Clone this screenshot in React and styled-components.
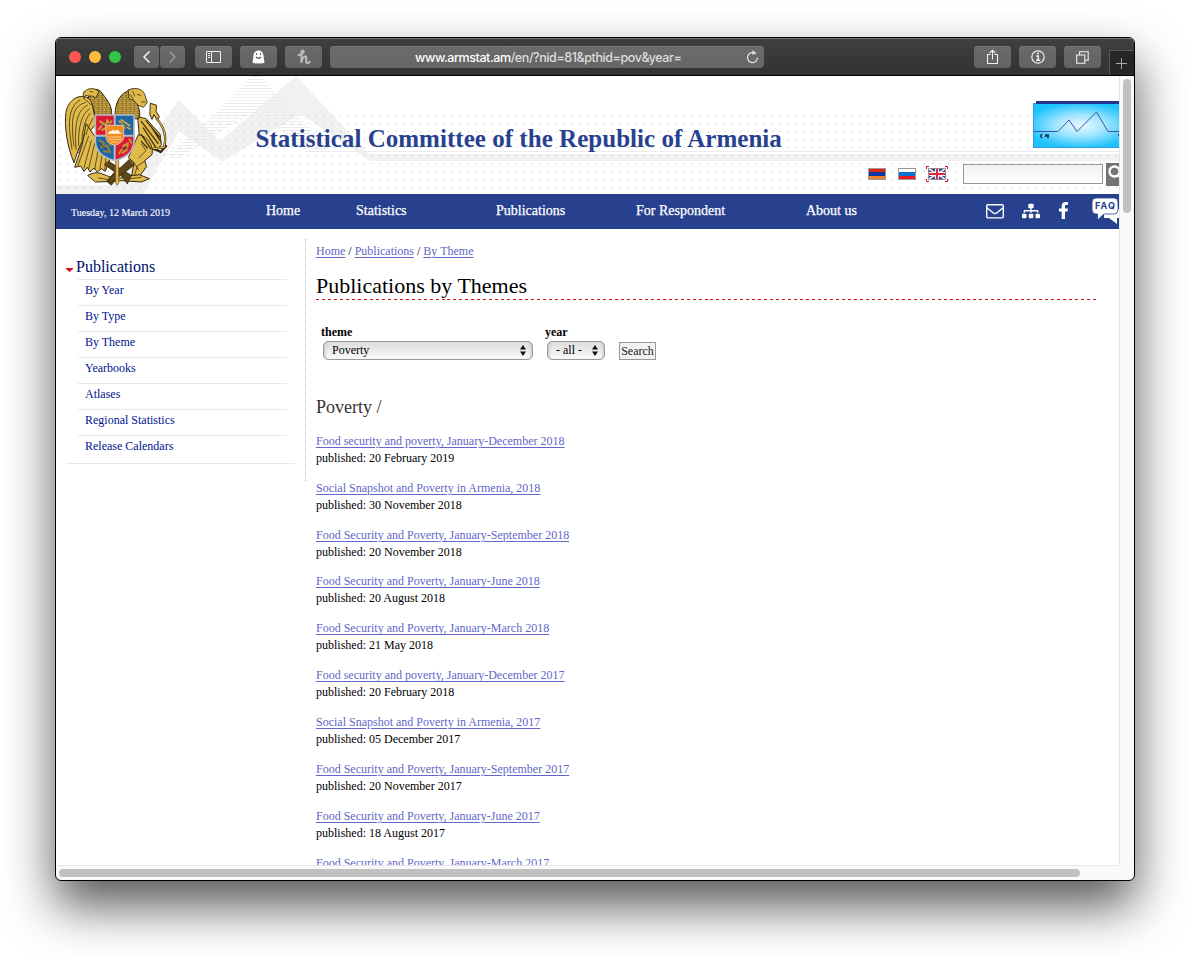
import React from 'react';
import styled, { createGlobalStyle } from 'styled-components';
import { FaSitemap, FaFacebookF } from 'react-icons/fa';

const serif = '"Liberation Serif", "Times New Roman", serif';
const navy = '#28418f';

const GlobalStyle = createGlobalStyle`
  *, *::before, *::after { box-sizing: border-box; }
  body { margin: 0; background: #fff; overflow: hidden; font-family: ${serif}; font-size: 12px; color: #000; }
  svg { display: block; flex: none; }
`;

const Desktop = styled.div`
  width: 1190px;
  height: 954px;
  padding: 37px 55px 0;
  overflow: hidden;
`;

const BrowserWindow = styled.div`
  width: 1080px;
  height: 844px;
  border: 1px solid #000;
  border-radius: 6px;
  overflow: hidden;
  background: #fafafa;
  box-shadow: 0 25px 50px rgba(0, 0, 0, 0.66);
  display: flex;
  flex-direction: column;
`;

const TitleBar = styled.div`
  flex: none;
  height: 38px;
  display: flex;
  align-items: flex-start;
  padding: 7px 0 0 13px;
  background: linear-gradient(#3e403f, #313332);
  border-top: 1px solid #747574;
  border-bottom: 1px solid #000;
`;

const Lights = styled.div`
  display: flex;
  gap: 8px;
  padding-top: 5px;
  width: 65px;
`;

const Light = styled.span`
  width: 12px;
  height: 12px;
  border-radius: 50%;
  background: ${(p) => p.$color};
`;

const ToolButton = styled.div`
  flex: none;
  width: ${(p) => p.$width || 37}px;
  height: 22px;
  margin-left: ${(p) => p.$gap ?? 8}px;
  border-radius: 4px;
  background: linear-gradient(#696a69, #616362);
  box-shadow: inset 0 1px 0 #767776;
  display: flex;
  align-items: center;
  justify-content: center;
`;

const AddressBar = styled.div`
  flex: none;
  width: 434px;
  height: 22px;
  margin-left: 8px;
  padding: 0 5px 0 85px;
  border-radius: 4px;
  background: linear-gradient(#6a6b6a, #656665);
  box-shadow: inset 0 1px 0 #767776;
  display: flex;
  align-items: center;
  justify-content: space-between;
  font: 500 12.5px/24px Inter, sans-serif;
  letter-spacing: -0.42px;
  color: #fff;
  white-space: nowrap;
  > span { padding-top: 1px; }
  span span { color: #dedede; }
`;

const NewTab = styled.div`
  flex: none;
  width: 25px;
  height: 25px;
  margin: 4px 0 0 8px;
  border: 1px solid #5a5c5b;
  border-width: 1px 0 0 1px;
  background: #252727;
  display: flex;
  align-items: center;
  padding-left: 6px;
`;

const Viewport = styled.div`
  flex: 1;
  min-height: 0;
  display: flex;
`;

const Page = styled.div`
  flex: none;
  width: 1063px;
  height: 789px;
  overflow: hidden;
  background: #fff;
`;

const VerticalTrack = styled.div`
  width: 15px;
  height: 790px;
  border-left: 1px solid #e6e6e6;
  padding: 3px 0 0 3px;
`;

const HorizontalTrack = styled.div`
  flex: none;
  height: 15px;
  width: 1064px;
  border-top: 1px solid #e6e6e6;
  padding: 3px;
`;

const Thumb = styled.div`
  width: ${(p) => p.$w}px;
  height: ${(p) => p.$h}px;
  border-radius: 4px;
  background: #c1c1c1;
`;

const Header = styled.header`
  height: 118px;
  display: grid;
  grid-template-columns: 1063px;
  overflow: hidden;
`;

const Backdrop = styled.svg`
  grid-area: 1 / 1;
`;

const HeaderContent = styled.div`
  grid-area: 1 / 1;
  display: flex;
  padding-left: 4px;
`;

const EmblemBox = styled.div`
  flex: none;
  padding-top: 8px;
  width: 195.5px;
`;

const SiteTitle = styled.div`
  flex: none;
  width: 608.5px;
  padding-top: 47px;
  font-size: 25px;
  line-height: 32px;
  font-weight: bold;
  letter-spacing: 0.03px;
  color: ${navy};
  white-space: nowrap;
`;

const HeaderTools = styled.div`
  flex: none;
  width: 255px;
  display: flex;
  flex-direction: column;
  overflow: hidden;
`;

const LogoRow = styled.div`
  height: 87px;
  padding: 25px 0 0 169px;
`;

const ToolRow = styled.div`
  display: flex;
`;

const Flags = styled.div`
  flex: none;
  display: flex;
  gap: 8px;
  padding-top: 3px;
  margin-left: 2px;
  width: 97px;
`;

const SearchInput = styled.div`
  flex: none;
  width: 140px;
  height: 20px;
  margin: 1px 3px 0 0;
  border: 1px solid #999;
  background: linear-gradient(#f1f1f1, #fff);
`;

const SearchButton = styled.div`
  flex: none;
  width: 24px;
  height: 23px;
  background: #747474;
  padding: 1px 0 0 1px;
`;

const Nav = styled.nav`
  height: 35px;
  overflow: hidden;
  background: ${navy};
  color: #fff;
  display: flex;
  font-size: 14px;
  line-height: 33px;
  -webkit-text-stroke: 0.25px #fff;
`;

const DateText = styled.span`
  flex: none;
  width: 210px;
  padding-left: 15px;
  font-size: 10px;
  line-height: 37px;
  -webkit-text-stroke: 0.1px #fff;
`;

const NavItem = styled.a`
  flex: none;
  width: ${(p) => p.$w}px;
`;

const NavIcons = styled.div`
  flex: none;
  display: flex;
  -webkit-text-stroke: 0;
`;

const NavIcon = styled.span`
  flex: none;
  width: ${(p) => p.$w}px;
  padding-top: ${(p) => p.$top}px;
`;

const Body = styled.div`
  display: flex;
  align-items: flex-start;
  padding-top: 10px;
`;

const Sidebar = styled.aside`
  flex: none;
  width: 250px;
  height: 242px;
  padding: 16px 10px 0;
  border-right: 1px dotted #b5b5b5;
  color: #00148f;
`;

const SideHeading = styled.div`
  display: flex;
  height: 24px;
  font-size: 16px;
  line-height: 24px;
  color: #000f6b;
  svg { margin: 13px 3px 0 0; }
`;

const SideList = styled.div`
  border-bottom: 1px solid #e9e9e9;
  padding: 0 8px 2px 12px;
  height: 185px;
`;

const SideItem = styled.div`
  height: 26px;
  padding-left: 7px;
  line-height: 21px;
  border-top: 1px solid #e9e9e9;
`;

const Main = styled.main`
  flex: none;
  width: 790px;
  padding-left: 10px;
`;

const Link = styled.a`
  color: #6266c9;
  text-decoration: underline;
  text-underline-offset: 2px;
  text-decoration-thickness: 1px;
`;

const Crumbs = styled.div`
  height: 32px;
  line-height: 24px;
`;

const PageTitle = styled.h1`
  height: 29px;
  margin: 0;
  font-size: 22px;
  line-height: 30px;
  font-weight: normal;
  background: repeating-linear-gradient(90deg, #d4121f 0 3px, transparent 3px 5.977px) bottom / 100% 1px no-repeat;
`;

const FilterForm = styled.div`
  display: flex;
  height: 96px;
  padding: 23px 0 0 5px;
`;

const Field = styled.div`
  width: ${(p) => p.$w}px;
  font-weight: bold;
  line-height: 18px;
`;

const Select = styled.div`
  width: ${(p) => p.$w}px;
  height: 19px;
  margin-left: 2px;
  padding: 0 6px 0 8px;
  border: 1px solid #999;
  border-radius: 5px;
  background: linear-gradient(#dcdcdc, #fbfbfb);
  box-shadow: inset 3px 0 3px -2px #c5c5c5, inset -3px 0 3px -2px #c5c5c5;
  display: flex;
  align-items: center;
  justify-content: space-between;
  font-weight: normal;
  line-height: 17px;
`;

const SubmitButton = styled.div`
  width: 37px;
  height: 18px;
  margin-top: 19px;
  border: 1px solid #999;
  background: #f2f2f2;
  color: #222;
  text-align: center;
  line-height: 16px;
`;

const GroupTitle = styled.h2`
  margin: 0;
  height: 36.8px;
  font-size: 18px;
  line-height: 23px;
  font-weight: normal;
  color: #333;
`;

const Entry = styled.div`
  height: 46.875px;
  line-height: 17px;
`;

const sideItems = ['By Year', 'By Type', 'By Theme', 'Yearbooks', 'Atlases', 'Regional Statistics', 'Release Calendars'];

const entries = [
  ['Food security and poverty, January-December 2018', '20 February 2019'],
  ['Social Snapshot and Poverty in Armenia, 2018', '30 November 2018'],
  ['Food Security and Poverty, January-September 2018', '20 November 2018'],
  ['Food Security and Poverty, January-June 2018', '20 August 2018'],
  ['Food Security and Poverty, January-March 2018', '21 May 2018'],
  ['Food security and poverty, January-December 2017', '20 February 2018'],
  ['Social Snapshot and Poverty in Armenia, 2017', '05 December 2017'],
  ['Food Security and Poverty, January-September 2017', '20 November 2017'],
  ['Food Security and Poverty, January-June 2017', '18 August 2017'],
  ['Food Security and Poverty, January-March 2017'],
];

const Arrows = () => (
  <svg width="6" height="11" viewBox="0 0 6 11"><path d="M0 4.5 3 0l3 4.5zM0 6.5h6L3 11z" fill="#111" /></svg>
);

const HeaderArt = () => (
  <Backdrop width="1063" height="118" viewBox="0 0 1063 118">
    <defs>
      <pattern id="dots" x="4" y="7" width="8" height="8" patternUnits="userSpaceOnUse">
        <rect width="1" height="1" fill="#c4c4c4" />
      </pattern>
      <pattern id="stripes" width="4" height="3" patternUnits="userSpaceOnUse">
        <rect width="4" height="1" fill="#ececec" />
      </pattern>
    </defs>
    <path d="M0 109H60L123 24L164 65L240 0L313 78H1063V85H314L244 37.7L166.3 86L123 55L87 118H0Z" fill="#f1f1f1" />
    <path d="M200 -4L278 78H252L204 36L184 44L122 83L108 80L150 46Z" fill="url(#stripes)" />
    <rect x="262" y="75" width="801" height="1" fill="#ececec" />
    <rect x="4" y="39" width="1059" height="75" fill="url(#dots)" />
  </Backdrop>
);

const Emblem = () => (
  <svg width="110" height="106" viewBox="0 0 330 318" strokeLinejoin="round" strokeLinecap="round">
    <defs>
      <pattern id="scales" width="12" height="12" patternUnits="userSpaceOnUse">
        <rect width="12" height="12" fill="#e0bb4c" />
        <path d="M0 2Q3 8 6 2Q9 8 12 2M-6 8Q-3 14 0 8Q3 14 6 8Q9 14 12 8" fill="none" stroke="#4a3511" strokeWidth="2.4" />
      </pattern>
    </defs>
    <g fill="#e0bb4c" stroke="#35270d" strokeWidth="3">
      <path d="M92 45C60 25 25 45 18 85C12 125 22 190 42 236L54 200C62 180 70 165 78 155L108 120Z" />
      <path d="M78 120L66 185L44 250L62 246L72 262L82 250L90 264L102 252L112 264L124 254L136 262L150 225L120 180Z" />
      <path d="M234 98L258 104L280 128L300 150L304 182L290 200L242 186Z" />
      <path d="M236 152C260 156 282 184 276 212L254 230L260 248L240 274L214 280L222 236L206 222Z" />
      <path d="M272 58L290 64L288 82L298 98L292 108L282 92L276 106L270 92Z" />
      <path d="M84 274C112 258 126 270 148 278L174 284L204 276L238 272L268 284L244 294L184 290L158 292L108 294Z" />
    </g>
    <g fill="url(#scales)" stroke="#35270d" strokeWidth="3">
      <path d="M84 42C92 16 106 10 122 22L134 38C150 58 158 76 154 98H108C96 70 98 50 84 42Z" />
      <path d="M166 98C162 70 176 32 198 24C216 8 236 16 242 36L232 62C242 84 240 92 236 104Z" />
    </g>
    <path d="M72 24C84 10 106 10 116 24L108 42Q98 34 86 36L76 34L72 44Q66 32 72 24Z" fill="#e0bb4c" stroke="#35270d" strokeWidth="2.5" />
    <path d="M206 18C230 6 254 18 256 38L262 56L250 70L234 64L222 50L208 44Z" fill="#e0bb4c" stroke="#35270d" strokeWidth="2.5" />
    <path d="M290 104C312 128 320 160 312 190L282 194L302 204L318 186" fill="none" stroke="#35270d" strokeWidth="7" />
    <path d="M290 104C312 128 320 160 312 190L282 194" fill="none" stroke="#e0bb4c" strokeWidth="3.5" />
    <g fill="none" stroke="#433110" strokeWidth="2.4">
      <path d="M76 56C40 64 30 100 42 186M82 64C52 78 42 120 48 196M88 74C64 92 54 130 56 184M90 88C76 104 66 140 66 168M98 104C88 122 82 136 78 152M60 48C34 62 24 96 30 150L36 196M74 46Q84 52 92 62" />
      <path d="M86 156L54 244M94 170L72 252M104 178L86 254M116 190L104 256M128 200L120 254M140 206L134 256M74 150L56 206" />
      <path d="M90 22L98 24M232 32L242 34M244 54L256 54M218 22L224 36M212 32L220 46" />
      <path d="M244 112L294 178M250 132L286 188M244 152L272 194M258 110L300 160M244 172L262 192M272 126L302 172" strokeWidth="4" />
      <path d="M244 180L258 200L236 222M222 236L236 258M256 230L232 246L224 272M116 282L140 286M208 284L244 280" />
    </g>
    <g fill="#5c471d" stroke="#332408" strokeWidth="2">
      <path d="M146 232L214 274L202 300L180 270L154 304L140 292L164 264L134 242Z" />
      <path d="M208 226L142 288L152 298L222 244Z" />
    </g>
    <path d="M167 230V298L171 304L176 298V230Z" fill="#e1ba4b" stroke="#6f5319" strokeWidth="2" />
    <path d="M106 93H222V170C222 204 194 222 164 230C134 222 106 204 106 170Z" fill="#1c67a8" />
    <path d="M106 93H163V154H106ZM164 158H222V178C218 206 190 222 164 228Z" fill="#dd1836" />
    <g fill="none" stroke="#c89b38" strokeWidth="6">
      <path d="M116 136L128 122L120 112L138 124L142 108L148 120L154 112M126 138L146 128" />
      <path d="M178 112L194 130L210 134M184 108L208 124" stroke="#c9a54c" />
      <path d="M118 168L132 178L124 190L140 184L150 204L132 202M142 170L152 184" stroke="#998039" />
      <path d="M178 208L192 184L204 178L200 198L188 206M208 166L214 176" />
    </g>
    <path d="M120 118L134 128L150 118M180 118L204 136M118 178L140 196M182 192L204 192" fill="none" stroke="#31323b" strokeWidth="2.5" />
    <path d="M164 93V228M106 155H222" stroke="#b8b9c3" strokeWidth="6" />
    <path d="M106 93H222V170C222 204 194 222 164 230C134 222 106 204 106 170Z" fill="none" stroke="#b8b9c3" strokeWidth="5" />
    <path d="M138 124H191V158C191 172 178 180 165 184C150 180 138 172 138 158Z" fill="#f28c1e" stroke="#d6c7c1" strokeWidth="3" />
    <path d="M142 149L151 141H157L159 136L164 141L173 137L179 144L187 149Z" fill="#fff7e8" />
    <path d="M145 159H185M147 166H183M154 174H176" stroke="#ffd5a0" strokeWidth="3" strokeDasharray="5 3" />
  </svg>
);

const SiteLogo = () => (
  <svg width="100" height="48" viewBox="0 0 100 48">
    <defs>
      <radialGradient id="glow" cx="45%" cy="50%" r="52%">
        <stop offset="0" stopColor="#e8f8ff" />
        <stop offset="0.45" stopColor="#a5e6ff" />
        <stop offset="1" stopColor="#1cc3fd" />
      </radialGradient>
    </defs>
    <rect x="0.5" y="2.5" width="105" height="44" fill="url(#glow)" stroke="#3598d8" />
    <rect x="3" width="97" height="3" fill="#26328f" />
    <path d="M1 30.5H25L36 19L44 30.5L63.5 11L75 30.5H100" fill="none" stroke="#3a55a8" />
    <path d="M9 33L7.5 35L9 37M13.5 33L12.5 35H16M15 33V37.5M85 34H87M86 36.5H88" fill="none" stroke="#12324a" strokeWidth="1.3" />
  </svg>
);

const TricolorFlag = ({ colors }) => (
  <svg width="22" height="16" viewBox="0 0 22 16">
    <rect x="2" y="2" width="18" height="12" fill="#999" />
    {colors.map((c, i) => (
      <rect key={c} x="3" y={[3, 6, 10][i]} width="16" height={[3, 4, 3][i]} fill={c} />
    ))}
  </svg>
);

const BritishFlag = () => (
  <svg width="22" height="16" viewBox="0 0 22 16">
    <rect x="2" y="2" width="18" height="12" fill="#8b8b98" />
    <rect x="3" y="3" width="16" height="10" fill="#2a3f7e" />
    <path d="M3 3L19 13M19 3L3 13" stroke="#e6e3ec" strokeWidth="1.8" />
    <path d="M9 3H13V13H9ZM3 6H19V10H3Z" fill="#f6eef0" />
    <path d="M10 3H12V13H10ZM3 7H19V9H3Z" fill="#d92a40" />
    <path d="M3 0.5H.5V3M19 .5H21.5V3M.5 13V15.5H3M21.5 13V15.5H19" fill="none" stroke="#e50019" />
  </svg>
);

const FaqIcon = () => (
  <svg width="32" height="27" viewBox="0 0 32 27">
    <path d="M12 11H28Q31 11 31 14V17Q31 19 28 19.5L25 20V26L17 20H12Z" fill="#fff" />
    <path d="M4 0H22Q26 0 26 4V12Q26 16 22 16H12L5.5 22V16H4Q0 16 0 12V4Q0 0 4 0Z" fill="#fff" stroke={navy} strokeWidth="0.8" />
    <text x="3" y="11" textLength="20" fontFamily="Inter, sans-serif" fontSize="9" fontWeight="700" fill={navy}>FAQ</text>
  </svg>
);

const Chevron = ({ left }) => (
  <svg width="9" height="14" viewBox="0 0 9 14">
    <path d={left ? 'M7.5 1.5L2 7L7.5 12.5' : 'M1.5 1.5L7 7L1.5 12.5'} fill="none" stroke={left ? '#f5f5f5' : '#999'} strokeWidth="1.5" />
  </svg>
);

const Toolbar = () => (
  <TitleBar>
    <Lights>
      <Light $color="#fc5753" />
      <Light $color="#fdbc40" />
      <Light $color="#33c748" />
    </Lights>
    <ToolButton $width={25} $gap={0}><Chevron left /></ToolButton>
    <ToolButton $width={25} $gap={1}><Chevron /></ToolButton>
    <ToolButton $gap={10}>
      <svg width="15" height="12" viewBox="0 0 15 12" fill="none" stroke="#eee">
        <path d="M.5.5H14.5V11.5H.5ZM5.5.5V11.5M2 2.5H4M2 4.5H4M2 6.5H4" />
      </svg>
    </ToolButton>
    <ToolButton>
      <svg width="13" height="14" viewBox="0 0 13 14">
        <path d="M1.5 6C1.5-1.4 11.5-1.4 11.5 6L12.5 12.5Q11.5 14 10.3 12.8Q9.3 14.4 8.2 13Q6.5 14.6 5 13Q3.8 14.4 2.7 12.8Q1.5 14 .5 12.5Z" fill="#fff" />
        <path d="M4.5 3.3V5M8.5 3.3V5M4 7Q6.5 9.6 9 7" fill="none" stroke="#555" strokeWidth="1.2" />
      </svg>
    </ToolButton>
    <ToolButton>
      <svg width="14" height="16" viewBox="0 0 14 16" fill="none" stroke="#b9b9b9" strokeWidth="2.1" strokeLinecap="round">
        <path d="M1.5 6Q4.5 6.5 6.5 3.5Q7 1.3 5.5 1.5Q4 2 4.4 6V14Q5 8.4 7.8 7.4Q9.6 7 9.2 10Q8.8 14.3 10.4 14.3Q11.8 14.3 12.7 12.8" />
      </svg>
    </ToolButton>
    <AddressBar>
      <span>www.armstat.am<span>/en/?nid=81&amp;pthid=pov&amp;year=</span></span>
      <svg width="13" height="14" viewBox="0 0 13 14" fill="none" stroke="#e3e3e3" strokeWidth="1.2">
        <path d="M10.2 4.2A5 5 0 1 0 11.5 7.8M6.5 2.6H9" />
        <path d="M6.5 0L9.8 2.7L6.5 5.2Z" fill="#e3e3e3" stroke="none" />
      </svg>
    </AddressBar>
    <ToolButton $gap={210}>
      <svg width="13" height="16" viewBox="0 0 13 16" fill="none" stroke="#f0f0f0" strokeWidth="1.1">
        <path d="M4.5 5.5H1.5V14.5H11.5V5.5H8.5M6.5 10.5V1.5M3.7 4L6.5 1.2L9.3 4" />
      </svg>
    </ToolButton>
    <ToolButton>
      <svg width="14" height="14" viewBox="0 0 14 14" fill="none" stroke="#f0f0f0" strokeWidth="1.2">
        <circle cx="7" cy="7" r="6.2" />
        <path d="M5.3 6H7.3V10M5 10.2H9.2" strokeWidth="1.5" />
        <circle cx="7" cy="3.6" r="1" fill="#f0f0f0" stroke="none" />
      </svg>
    </ToolButton>
    <ToolButton>
      <svg width="13" height="13" viewBox="0 0 13 13" fill="none" stroke="#f0f0f0" strokeWidth="1.1">
        <path d="M.7 4H8.8V12.3H.7ZM3.6 3.5V.7H12.2V9.2H9.2" />
      </svg>
    </ToolButton>
    <NewTab>
      <svg width="11" height="11" viewBox="0 0 11 11"><path d="M5.5 0V11M0 5.5H11" stroke="#aaa" /></svg>
    </NewTab>
  </TitleBar>
);

const SiteHeader = () => (
  <Header>
    <HeaderArt />
    <HeaderContent>
      <EmblemBox><Emblem /></EmblemBox>
      <SiteTitle>Statistical Committee of the Republic of Armenia</SiteTitle>
      <HeaderTools>
        <LogoRow><SiteLogo /></LogoRow>
        <ToolRow>
          <Flags>
            <TricolorFlag colors={['#df2515', '#0938a5', '#f28124']} />
            <TricolorFlag colors={['#ffffff', '#0b72cf', '#f01922']} />
            <BritishFlag />
          </Flags>
          <SearchInput />
          <SearchButton>
            <svg width="20" height="20" viewBox="0 0 20 20" fill="none" stroke="#fff" strokeWidth="2.4">
              <circle cx="7.5" cy="7.5" r="5" /><path d="M11 11L16 16" />
            </svg>
          </SearchButton>
        </ToolRow>
      </HeaderTools>
    </HeaderContent>
  </Header>
);

const Navigation = () => (
  <Nav>
    <DateText>Tuesday, 12 March 2019</DateText>
    <NavItem $w={90}>Home</NavItem>
    <NavItem $w={140}>Statistics</NavItem>
    <NavItem $w={140}>Publications</NavItem>
    <NavItem $w={170}>For Respondent</NavItem>
    <NavItem $w={180}>About us</NavItem>
    <NavIcons>
      <NavIcon $w={36} $top={10}>
        <svg width="18" height="15" viewBox="0 0 18 15" fill="none" stroke="#fff" strokeWidth="1.4">
          <rect x="0.7" y="0.7" width="16.6" height="13.2" rx="1.3" />
          <path d="M1 3.8L7 8.8Q9 10.3 11 8.8L17 3.8" />
        </svg>
      </NavIcon>
      <NavIcon $w={33} $top={8}><FaSitemap size={18} /></NavIcon>
      <NavIcon $w={37} $top={8}><FaFacebookF size={17} /></NavIcon>
      <NavIcon $w={32} $top={4}><FaqIcon /></NavIcon>
    </NavIcons>
  </Nav>
);

export default function App() {
  return (
    <Desktop>
      <GlobalStyle />
      <BrowserWindow>
        <Toolbar />
        <Viewport>
          <Page>
            <SiteHeader />
            <Navigation />
            <Body>
              <Sidebar>
                <SideHeading>
                  <svg width="7" height="4" viewBox="0 0 7 4"><path d="M0 0H7V1L3.5 4L0 1Z" fill="#d4121f" /></svg>
                  Publications
                </SideHeading>
                <SideList>
                  {sideItems.map((t) => <SideItem key={t}>{t}</SideItem>)}
                </SideList>
              </Sidebar>
              <Main>
                <Crumbs>
                  <Link>Home</Link> / <Link>Publications</Link> / <Link>By Theme</Link>
                </Crumbs>
                <PageTitle>Publications by Themes</PageTitle>
                <FilterForm>
                  <Field $w={224}>
                    theme
                    <Select $w={210}>Poverty<Arrows /></Select>
                  </Field>
                  <Field $w={74}>
                    year
                    <Select $w={58}>- all -<Arrows /></Select>
                  </Field>
                  <SubmitButton>Search</SubmitButton>
                </FilterForm>
                <GroupTitle>Poverty /</GroupTitle>
                {entries.map(([title, date]) => (
                  <Entry key={title}>
                    <Link>{title}</Link>
                    {date && <div>published: {date}</div>}
                  </Entry>
                ))}
              </Main>
            </Body>
          </Page>
          <VerticalTrack><Thumb $w={8} $h={134} /></VerticalTrack>
        </Viewport>
        <HorizontalTrack><Thumb $w={1021} $h={8} /></HorizontalTrack>
      </BrowserWindow>
    </Desktop>
  );
}
